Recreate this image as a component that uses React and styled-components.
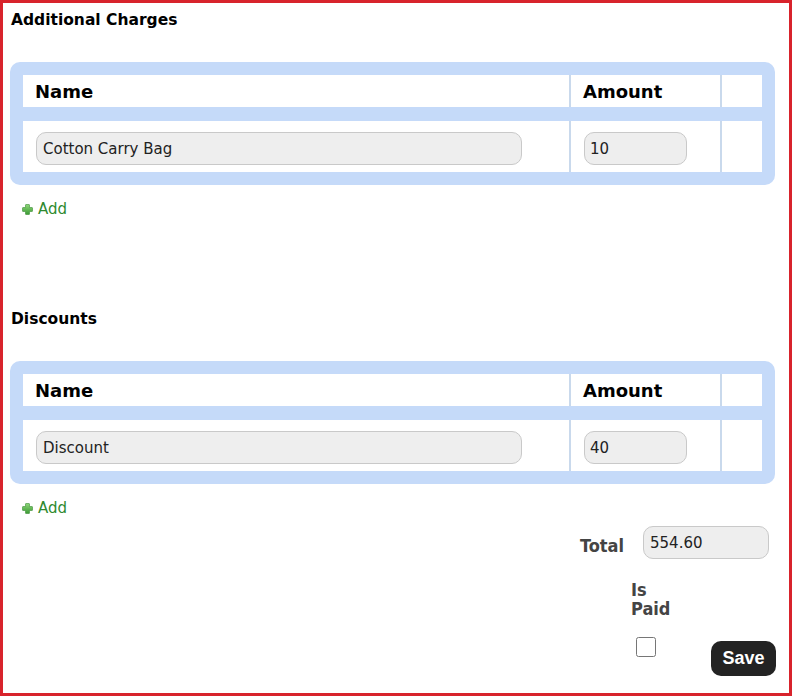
import React, { useState } from "react";
import styled, { createGlobalStyle } from "styled-components";

const GlobalStyle = createGlobalStyle`
  html, body {
    margin: 0;
    padding: 0;
    background: #ffffff;
  }
  body {
    font-family: "DejaVu Sans", Verdana, sans-serif;
    color: #000;
  }
`;

const charges = [{ name: "Cotton Carry Bag", amount: "10" }];
const discounts = [{ name: "Discount", amount: "40" }];

const PlusIcon = () => (
  <svg width="11" height="11" viewBox="0 0 11 11">
    <defs>
      <linearGradient id="plusGrad" x1="0" y1="0" x2="0" y2="1">
        <stop offset="0" stopColor="#8fd77a" />
        <stop offset="1" stopColor="#3a9a33" />
      </linearGradient>
    </defs>
    <path
      d="M4 0.5 H7 Q7.5 0.5 7.5 1 V3.5 H10 Q10.5 3.5 10.5 4 V7 Q10.5 7.5 10 7.5 H7.5 V10 Q7.5 10.5 7 10.5 H4 Q3.5 10.5 3.5 10 V7.5 H1 Q0.5 7.5 0.5 7 V4 Q0.5 3.5 1 3.5 H3.5 V1 Q3.5 0.5 4 0.5 Z"
      fill="url(#plusGrad)"
      stroke="#3d8f35"
      strokeWidth="0.6"
    />
  </svg>
);

const ChargeTable = ({ rows }) => {
  const [items, setItems] = useState(rows);

  const update = (i, key, value) => {
    setItems(items.map((it, n) => (n === i ? { ...it, [key]: value } : it)));
  };

  return (
    <Panel>
      <Row>
        <HeadCell>Name</HeadCell>
        <HeadCell $divider>Amount</HeadCell>
        <HeadCell $divider></HeadCell>
      </Row>
      {items.map((item, i) => (
        <Row key={i} $body>
          <BodyCell>
            <TextInput
              $width="486px"
              value={item.name}
              onChange={(e) => update(i, "name", e.target.value)}
            />
          </BodyCell>
          <BodyCell $divider>
            <TextInput
              $width="103px"
              $pad="5px"
              value={item.amount}
              onChange={(e) => update(i, "amount", e.target.value)}
            />
          </BodyCell>
          <BodyCell $divider></BodyCell>
        </Row>
      ))}
    </Panel>
  );
};

const App = () => {
  const [total, setTotal] = useState("554.60");
  const [paid, setPaid] = useState(false);

  return (
    <React.Fragment>
      <GlobalStyle />
      <Page>
        <Section>
          <Title>Additional Charges</Title>
          <ChargeTable rows={charges} />
          <AddLink href="#">
            <PlusIcon />
            Add
          </AddLink>
        </Section>

        <Section $next>
          <Title>Discounts</Title>
          <ChargeTable rows={discounts} />
          <AddLink href="#">
            <PlusIcon />
            Add
          </AddLink>
        </Section>

        <Footer>
          <TotalRow>
            <Label>Total</Label>
            <TextInput
              $width="126px"
              $pad="6px"
              value={total}
              onChange={(e) => setTotal(e.target.value)}
            />
          </TotalRow>
          <PayRow>
            <PaidGroup>
              <Label>Is Paid</Label>
              <Check
                type="checkbox"
                checked={paid}
                onChange={(e) => setPaid(e.target.checked)}
              />
            </PaidGroup>
            <SaveButton>Save</SaveButton>
          </PayRow>
        </Footer>
      </Page>
    </React.Fragment>
  );
};

export default App;

const Page = styled.div`
  box-sizing: border-box;
  width: 792px;
  height: 696px;
  border: 3px solid #d8232c;
  padding: 5px 13px 0 7px;
  display: flex;
  flex-direction: column;
`;

const Section = styled.div`
  display: flex;
  flex-direction: column;
  align-items: flex-start;
  margin-top: ${(p) => (p.$next ? "89px" : "0")};
`;

const Title = styled.div`
  font-family: "DejaVu Sans", Verdana, sans-serif;
  font-weight: bold;
  font-size: 15.5px;
  line-height: 19px;
  margin: 3px 0 32px 1px;
`;

const Panel = styled.div`
  box-sizing: border-box;
  width: 765px;
  background: #c5daf9;
  border-radius: 10px;
  padding: 13px;
  display: flex;
  flex-direction: column;
  gap: 14px;
`;

const Row = styled.div`
  display: grid;
  grid-template-columns: 546px 151px 1fr;
  background: #ffffff;
  height: ${(p) => (p.$body ? "51px" : "32px")};
`;

const HeadCell = styled.div`
  box-sizing: border-box;
  padding: 1px 12px 0;
  display: flex;
  align-items: center;
  font-family: "DejaVu Sans", Verdana, sans-serif;
  font-weight: bold;
  font-size: 18px;
  border-left: ${(p) => (p.$divider ? "2px solid #c9d9ec" : "none")};
`;

const BodyCell = styled.div`
  box-sizing: border-box;
  padding: 11px 13px 0;
  border-left: ${(p) => (p.$divider ? "2px solid #c9d9ec" : "none")};
`;

const TextInput = styled.input`
  box-sizing: border-box;
  width: ${(p) => p.$width};
  height: 33px;
  margin: 0;
  padding: 0 ${(p) => p.$pad || "6px"};
  border: 1px solid #c9c9c9;
  border-radius: 10px;
  background: #eeeeee;
  font-family: "DejaVu Sans", Verdana, sans-serif;
  font-size: 15px;
  color: #222;
  outline: none;
`;

const AddLink = styled.a`
  display: flex;
  align-items: center;
  gap: 5px;
  margin: 15px 0 0 12px;
  font-family: "DejaVu Sans", Verdana, sans-serif;
  font-size: 15px;
  line-height: 18px;
  color: #2f8a2f;
  text-decoration: none;
`;

const Footer = styled.div`
  display: flex;
  flex-direction: column;
  align-items: flex-end;
  margin-top: 9px;
`;

const TotalRow = styled.div`
  display: flex;
  align-items: center;
  gap: 19px;
  margin-right: 7px;
`;

const Label = styled.div`
  font-family: "DejaVu Sans Condensed", "DejaVu Sans", Tahoma, sans-serif;
  font-stretch: condensed;
  font-weight: bold;
  font-size: 18px;
  line-height: 19px;
  color: #444444;
  margin-top: 6px;
`;

const PayRow = styled.div`
  display: flex;
  align-items: flex-start;
  margin-top: 15px;
`;

const PaidGroup = styled.div`
  display: flex;
  flex-direction: column;
  align-items: flex-start;
  width: 43px;
  margin-right: 37px;
`;

const Check = styled.input`
  width: 20px;
  height: 20px;
  margin: 19px 0 0 5px;
`;

const SaveButton = styled.button`
  box-sizing: border-box;
  width: 65px;
  height: 35px;
  margin-top: 67px;
  border: none;
  border-radius: 10px;
  background: #232323;
  color: #ffffff;
  font-family: "Liberation Sans", Arial, sans-serif;
  font-weight: bold;
  font-size: 18px;
  cursor: pointer;
`;
